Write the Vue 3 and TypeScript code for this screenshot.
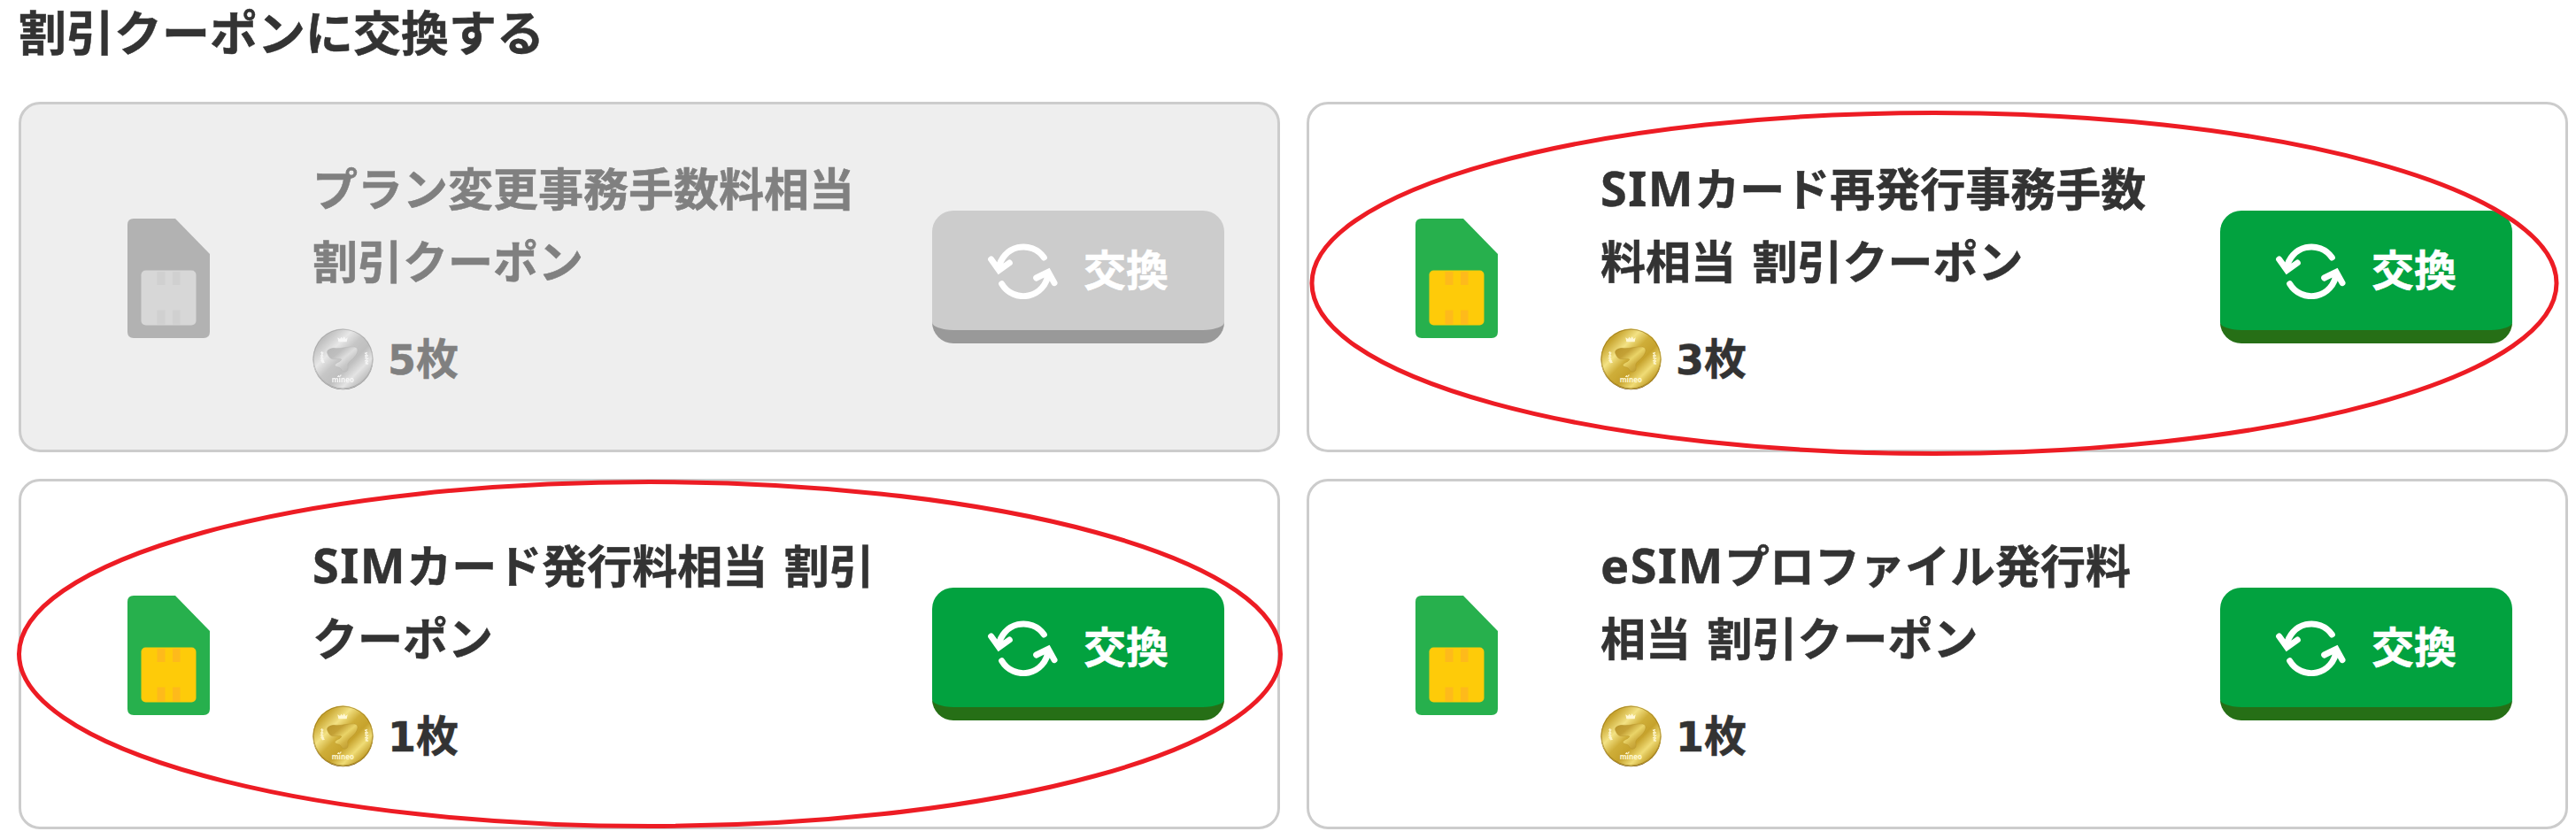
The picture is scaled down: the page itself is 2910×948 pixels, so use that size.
<script setup lang="ts">
interface Run { text: string; latin?: boolean }
interface Coupon { lines: Run[][]; cost: number; disabled?: boolean }

const coupons: Coupon[] = [
  { lines: [[{ text: 'プラン変更事務手数料相当' }], [{ text: '割引クーポン' }]], cost: 5, disabled: true },
  { lines: [[{ text: 'SIM', latin: true }, { text: 'カード再発行事務手数' }], [{ text: '料相当 割引クーポン' }]], cost: 3 },
  { lines: [[{ text: 'SIM', latin: true }, { text: 'カード発行料相当 割引' }], [{ text: 'クーポン' }]], cost: 1 },
  { lines: [[{ text: 'eSIM', latin: true }, { text: 'プロファイル発行料' }], [{ text: '相当 割引クーポン' }]], cost: 1 },
]
</script>

<template>
  <main class="page">
    <h2 class="heading">割引クーポンに交換する</h2>
    <svg class="defs" width="0" height="0" aria-hidden="true">
      <defs>
        <linearGradient id="gold" x1="0" y1="0" x2="1" y2="1">
          <stop offset="0" stop-color="#b08c1c" /><stop offset=".18" stop-color="#c8a530" />
          <stop offset=".34" stop-color="#f3e284" /><stop offset=".47" stop-color="#cfae39" />
          <stop offset=".6" stop-color="#c6a22c" /><stop offset=".73" stop-color="#f0dc76" />
          <stop offset=".86" stop-color="#c09b25" /><stop offset="1" stop-color="#8f6a10" />
        </linearGradient>
        <linearGradient id="goldInner" x1="0" y1="0" x2="1" y2="1">
          <stop offset="0" stop-color="#b8942a" /><stop offset=".3" stop-color="#c4a136" />
          <stop offset=".5" stop-color="#ead468" /><stop offset=".65" stop-color="#d2b244" />
          <stop offset="1" stop-color="#ad8820" />
        </linearGradient>
      </defs>
    </svg>
    <section class="grid">
      <article v-for="(c, i) in coupons" :key="i" class="card" :class="{ disabled: c.disabled }">
        <svg class="sim" viewBox="0 0 93 135">
          <path class="sim-body" d="M7 0H54L93 40V128Q93 135 86 135H7Q0 135 0 128V7Q0 0 7 0Z" />
          <rect class="sim-chip" x="15.5" y="58.5" width="62" height="62" rx="5" />
          <path class="sim-tab" d="M33.5 60h9v15h-9zM51 60h8.5v15h-8.5zM33.5 103.500h9v16h-9zM51 103.500h8.500v16h-8.500z" />
        </svg>
        <div class="info">
          <p class="title">
            <span v-for="(line, n) in c.lines" :key="n" class="line"><span v-for="(r, k) in line" :key="k" :class="{ latin: r.latin }">{{ r.text }}</span></span>
          </p>
          <div class="cost">
            <svg class="coin" viewBox="0 0 207 210">
              <circle cx="103.500" cy="106" r="102" fill="#765411" />
              <circle cx="103.500" cy="103.500" r="102.500" fill="url(#gold)" />
              <circle cx="103.500" cy="103.500" r="100" fill="none" stroke="#8d6c17" stroke-width="3" opacity=".55" />
              <path d="M50 84C47 75 58 67 75 67C100 70 122 60 143 63C156 66 155 79 147 91C140 104 126 110 120 120C117 128 123 133 119 142C112 152 100 147 98 140C92 128 76 134 76 124C78 116 90 117 98 107C101 101 80 104 71 104C59 104 54 94 50 84Z" fill="url(#goldInner)" stroke="#b08b26" stroke-width="1" />
              <path d="M88 46L85 31L93 36L98 29L102 35L107 28L112 36L119 31L116 46Z" fill="#fff8d5" />
              <g fill="none" stroke="#fff8d5" stroke-width="4" opacity=".9">
                <path d="M28 82l9 2m-5-5v12m-5 2l10 1m-3-5l-3 11m-5 1h11m-6-4l2 11m-5 0l11 3m-4-7v14m-5-5l11 2" />
                <path d="M177 85l9-3m-5 0l3 11m-7 0l12 0m-7-3l-1 13m-3-2l12 1m-6 0l-2 11m-5-3l12 1m-10 5l10 5m-5-8l-2 9" />
              </g>
              <path d="M84 163h5m0-4v6m5-2v-4h4" fill="none" stroke="#fff8d5" stroke-width="3" />
              <text x="103" y="182" text-anchor="middle">mineo</text>
            </svg>
            <span class="amount"><b>{{ c.cost }}</b>枚</span>
          </div>
        </div>
        <button class="exchange" type="button" :disabled="c.disabled">
          <svg class="swap" viewBox="227 160 237 192">
            <path d="M417 211A84.500 84.500 0 0 0 264 247M238 217L264.500 254L300 229M274 300A84.500 84.500 0 0 0 431 266M391 280L431.500 260L452 297" />
          </svg>
          <span class="label">交換</span>
        </button>
      </article>
    </section>
    <svg class="marks" viewBox="0 0 2910 948">
      <ellipse cx="2185" cy="320" rx="703" ry="192.500" />
      <ellipse cx="734" cy="739" rx="712.500" ry="194.500" />
    </svg>
  </main>
</template>

<style>
body { margin: 0; background: #fff; }
</style>

<style scoped>
.page { position: relative; box-sizing: border-box; width: 2910px; height: 948px; padding: 0 9px 0 21px; overflow: hidden; background: #fff; color: #333; font-family: "Noto Sans CJK JP", sans-serif; font-weight: 700; -webkit-text-stroke: .5px currentColor; }
.defs { position: absolute; }
.heading { margin: 0; height: 115px; line-height: 70px; font-size: 54px; font-weight: 700; }
.grid { display: grid; grid-template-columns: 1425px 1425px; grid-auto-rows: 396px; gap: 30px; }
.card { box-sizing: border-box; display: flex; border: 3px solid #ccc; border-radius: 24px; background: #fff; padding-left: 120px; }
.card.disabled { background: #eee; color: #808080; }
.sim { flex: none; width: 93px; height: 135px; margin-top: 129px; }
.sim-body { fill: #27b04d; }
.sim-chip { fill: #fecb09; }
.sim-tab { fill: #feba1b; }
.disabled .sim-body { fill: #b2b2b2; }
.disabled .sim-chip { fill: #d7d7d7; }
.disabled .sim-tab { fill: #d0d0d0; }
.info { flex: none; width: 700px; margin-left: 116px; padding-top: 52px; }
.title { margin: 0; font-size: 51px; line-height: 82px; word-spacing: 7px; white-space: nowrap; }
.line { display: block; height: 82px; }
.latin { font-family: "Noto Sans", sans-serif; font-size: 54px; letter-spacing: 1.5px; line-height: 1; }
.cost { display: flex; align-items: center; height: 70px; margin-top: 37px; gap: 16px; font-size: 48px; line-height: 70px; }
.amount { margin-top: -8px; }
.cost b { font-family: "DejaVu Sans", sans-serif; font-size: 46px; line-height: 1; }
.coin { width: 69px; height: 70px; -webkit-text-stroke: 0; }
.coin text { font: 700 24px "Open Sans", sans-serif; fill: #fff8d5; }
.disabled .coin { filter: grayscale(1) contrast(.5) brightness(1.32); }
.exchange { flex: none; box-sizing: border-box; display: flex; align-items: center; width: 330px; height: 150px; margin: 120px 0 0; padding: 0 0 0 63px; border: 0 solid #266f16; border-bottom-width: 15px; border-radius: 24px; background: #02a23f; color: #fff; font: inherit; font-size: 48px; line-height: 1; }
.disabled .exchange { background: #ccc; border-color: #999; }
.swap { width: 79px; height: 64px; margin: 0 29px 0 0; }
.label { margin-top: -8px; }
.swap path { fill: none; stroke: #fff; stroke-width: 21; stroke-linecap: round; stroke-linejoin: miter; }
.marks { position: absolute; left: 0; top: 0; width: 2910px; height: 948px; pointer-events: none; }
.marks ellipse { fill: none; stroke: #ed1c24; stroke-width: 5; }
</style>
